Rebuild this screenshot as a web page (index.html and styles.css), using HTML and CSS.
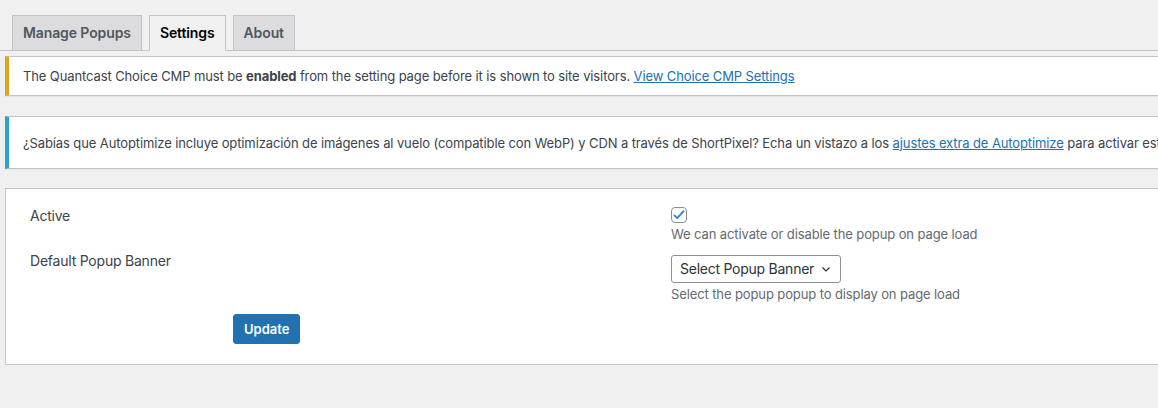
FILE: index.html
```html
<!DOCTYPE html>
<html>
  <head>
    <title>Popup Settings</title>
    <link rel="stylesheet" href="styles.css">
  </head>
  <body>
    <div class="wrap">
      <nav class="nav-tab-wrapper">
        <a class="nav-tab" href="#">Manage Popups</a>
        <a class="nav-tab nav-tab-active" href="#">Settings</a>
        <a class="nav-tab" href="#">About</a>
      </nav>

      <div class="notice notice-warning">
        <p>The Quantcast Choice CMP must be <b>enabled</b> from the setting page before it is shown to site visitors. <a href="#">View Choice CMP Settings</a></p>
      </div>

      <div class="notice notice-info">
        <p>¿Sabías que Autoptimize incluye optimización de imágenes al vuelo (compatible con WebP) y CDN a través de ShortPixel? Echa un vistazo a los <a href="#">ajustes extra de Autoptimize</a> para activar estas opciones.</p>
      </div>

      <form class="panel">
        <div class="labels">
          <div class="field-label">Active</div>
          <div class="field-label">Default Popup Banner</div>
        </div>
        <div class="fields">
          <span class="checkbox">
            <svg width="14" height="14" viewBox="0 0 20 20"><path d="M3.5 10.5l4 4 9-10" fill="none" stroke="#3582c4" stroke-width="2.6" stroke-linecap="round" stroke-linejoin="round"/></svg>
          </span>
          <p class="description">We can activate or disable the popup on page load</p>
          <span class="select">Select Popup Banner
            <svg width="12" height="12" viewBox="0 0 12 12"><path d="M2.5 4.5l3.5 3.5 3.5-3.5" fill="none" stroke="#2c3338" stroke-width="1.2"/></svg>
          </span>
          <p class="description">Select the popup popup to display on page load</p>
        </div>
        <div class="actions">
          <button type="button" class="button-primary">Update</button>
        </div>
      </form>
    </div>
  </body>
</html>
```

FILE: styles.css
```css
html, body {
  margin: 0;
  overflow: hidden;
}
body {
  background: #f0f0f1;
  color: #3c434a;
  font-family: Inter, "Liberation Sans", sans-serif;
  font-size: 13px;
  line-height: 1.5;
  letter-spacing: -0.11px;
}
.wrap {
  width: 1500px;
}
a {
  color: #2271b1;
}
.nav-tab-wrapper {
  display: flex;
  padding: 15px 0 0 5px;
  border-bottom: 1px solid #c3c4c7;
}
.nav-tab {
  margin-left: 7px;
  margin-bottom: -1px;
  padding: 5px 10px;
  border: 1px solid #c3c4c7;
  background: #dcdcde;
  color: #50575e;
  font-size: 14px;
  font-weight: 600;
  line-height: 24px;
  text-decoration: none;
}
.nav-tab-active {
  background: #f0f0f1;
  color: #000;
  border-bottom-color: #f0f0f1;
}
.notice {
  margin: 5px 0 0 5px;
  padding: 1px 12px;
  background: #fff;
  border: 1px solid #c3c4c7;
  border-left-width: 4px;
  box-shadow: 0 1px 1px rgba(0, 0, 0, .04);
}
.notice p {
  margin: 7px 0 5px;
  padding: 2px;
}
.notice-warning {
  border-left-color: #dba617;
}
.notice-info {
  margin-top: 20px;
  border-left-color: #2ea2cc;
}
.notice-info p {
  margin: 14px 0 12px;
}
.panel {
  display: grid;
  grid-template-columns: 641px 1fr;
  margin: 19px 0 0 5px;
  padding: 16px 24px 20px;
  background: #fff;
  border: 1px solid #c3c4c7;
}
.field-label {
  margin-bottom: 24px;
  font-size: 14px;
  line-height: 21px;
  letter-spacing: -0.22px;
}
.fields {
  display: flex;
  flex-direction: column;
  align-items: flex-start;
}
.checkbox {
  box-sizing: border-box;
  width: 16px;
  height: 16px;
  margin-top: 2px;
  border: 1px solid #8c8f94;
  border-radius: 4px;
  display: flex;
  align-items: center;
  justify-content: center;
}
.description {
  margin: 2px 0 0;
  color: #646970;
  font-size: 13px;
}
.select {
  box-sizing: border-box;
  display: flex;
  align-items: center;
  justify-content: space-between;
  width: 170px;
  height: 28px;
  margin-top: 10px;
  padding: 0 8px;
  border: 1px solid #8c8f94;
  border-radius: 3px;
  color: #2c3338;
  font-size: 14px;
  letter-spacing: -0.25px;
}
.actions {
  grid-column: 1 / -1;
  padding: 10px 0 0 203px;
}
.button-primary {
  height: 30px;
  padding: 0 10px;
  border: 1px solid #2271b1;
  border-radius: 3px;
  background: #2271b1;
  color: #fff;
  font-family: inherit;
  font-size: 13px;
  font-weight: 600;
}
```
